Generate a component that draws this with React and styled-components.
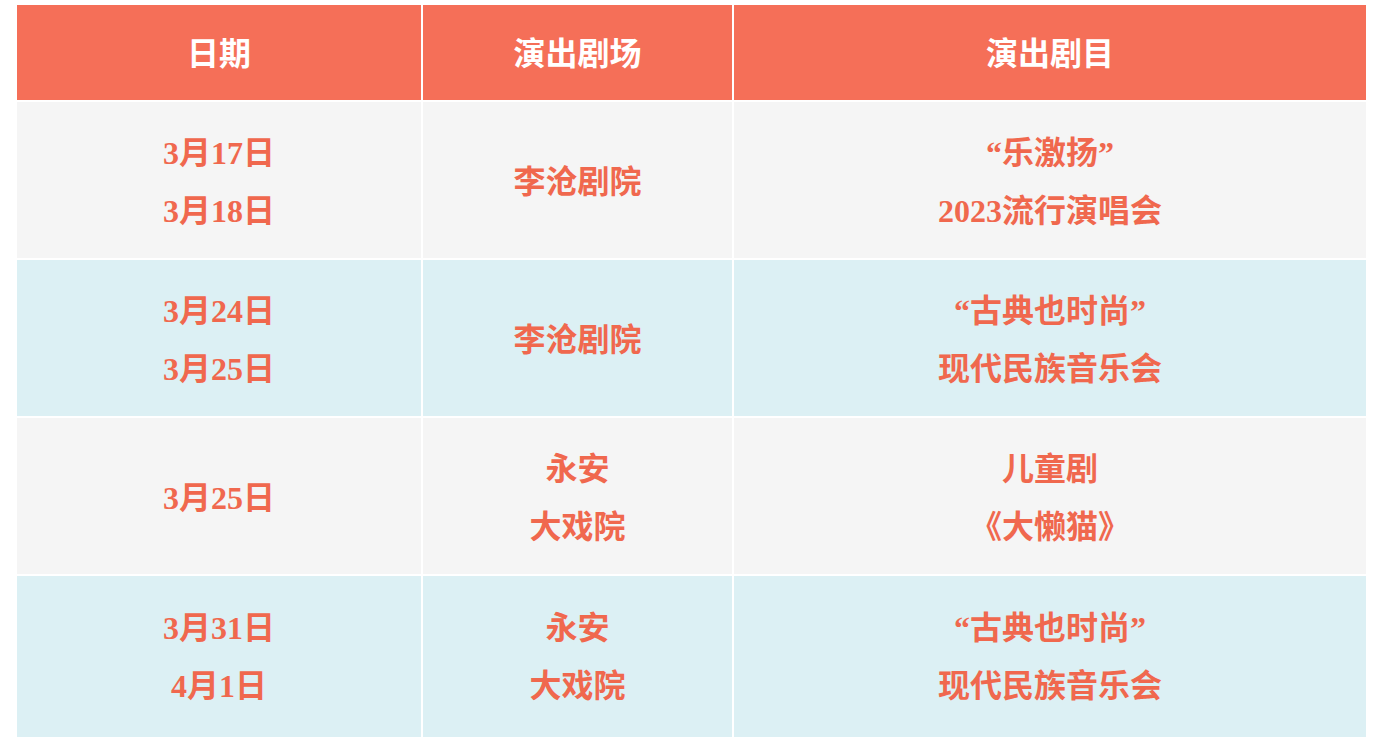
import React from "react";
import styled, { createGlobalStyle } from "styled-components";

const Global = createGlobalStyle`
  html, body { margin: 0; padding: 0; background: #ffffff; }
  body { font-family: "Liberation Serif", "Noto Sans CJK SC", serif; }
`;

const Page = styled.div`
  padding: 5px 11px 0 17px;
  width: 1349px;
`;

const Grid = styled.div`
  display: grid;
  grid-template-columns: 404px 309px 632px;
  grid-template-rows: 95px 156px 156px 156px 162px;
  column-gap: 2px;
  row-gap: 2px;
`;

const HeadCell = styled.div`
  background: #f56f58;
  color: #ffffff;
  display: flex;
  align-items: center;
  justify-content: center;
  font-family: "Noto Sans CJK SC", sans-serif;
  font-weight: 700;
  font-size: 32px;
  padding-bottom: 3px;
  box-sizing: border-box;
`;

const Cell = styled.div`
  background: ${(p) => (p.$alt ? "#dcf0f4" : "#f5f5f5")};
  color: #f0684e;
  display: flex;
  flex-direction: column;
  align-items: center;
  justify-content: center;
  padding-top: 3px;
  padding-bottom: ${(p) => (p.$last ? "4px" : "0")};
  box-sizing: border-box;
  font-family: "Liberation Serif", "Noto Sans CJK SC", serif;
  font-weight: 700;
  font-size: 32px;
  line-height: 58px;
  text-align: center;
`;

const Line = styled.div``;

const rows = [
  [["3月17日", "3月18日"], ["李沧剧院"], ["“乐激扬”", "2023流行演唱会"]],
  [["3月24日", "3月25日"], ["李沧剧院"], ["“古典也时尚”", "现代民族音乐会"]],
  [["3月25日"], ["永安", "大戏院"], ["儿童剧", "《大懒猫》"]],
  [["3月31日", "4月1日"], ["永安", "大戏院"], ["“古典也时尚”", "现代民族音乐会"]],
];

export default function App() {
  return (
    <>
      <Global />
      <Page>
        <Grid>
          <HeadCell>日期</HeadCell>
          <HeadCell>演出剧场</HeadCell>
          <HeadCell>演出剧目</HeadCell>
          {rows.map((r, i) =>
            r.map((lines, j) => (
              <Cell
                key={`${i}-${j}`}
                $alt={i % 2 === 1}
                $last={i === rows.length - 1}
              >
                {lines.map((l, k) => (
                  <Line key={k}>{l}</Line>
                ))}
              </Cell>
            ))
          )}
        </Grid>
      </Page>
    </>
  );
}
